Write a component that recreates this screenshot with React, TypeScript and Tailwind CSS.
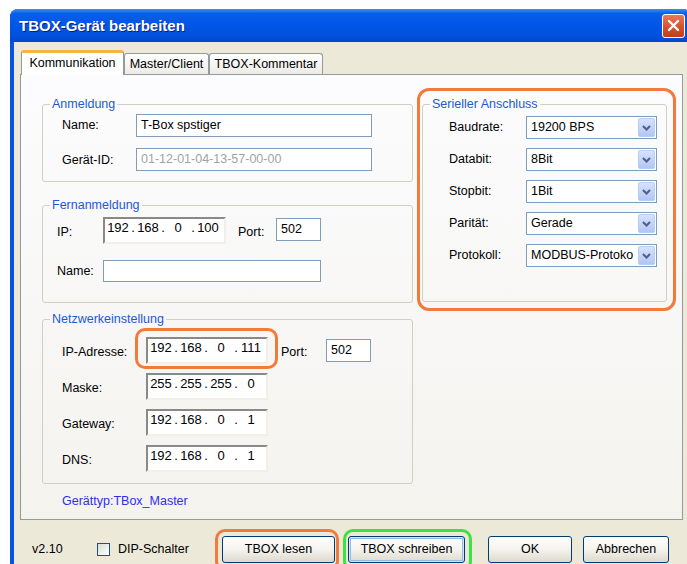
import { Fragment, type ReactNode } from 'react';

function TextBox({ value = '', muted = false, className = '' }: { value?: string; muted?: boolean; className?: string }) {
  return (
    <div
      className={`flex items-center whitespace-nowrap border border-[#7F9DB9] bg-white pl-[4px] ${muted ? 'text-[#A3A3A3]' : 'text-black'} ${className}`}
    >
      {value}
    </div>
  );
}

// sunken IP address control, four octets separated by dots
function IpBox({ parts, className = '' }: { parts: string[]; className?: string }) {
  return (
    <div
      className={`flex border-2 border-t-[#8A8985] border-l-[#8A8985] border-b-[#F1EFE6] border-r-[#F1EFE6] bg-white text-[13px] leading-[18px] ${className}`}
    >
      {parts.map((p, i) => (
        <Fragment key={i}>
          {i > 0 && <span className="w-[4px] text-center">.</span>}
          <span className="w-[26px] text-center">{p}</span>
        </Fragment>
      ))}
    </div>
  );
}

function Combo({ value }: { value: string }) {
  return (
    <div className="flex h-[23px] w-[131px] border border-[#7F9DB9] bg-white">
      <div className="flex-1 overflow-hidden whitespace-nowrap pl-[4px] leading-[21px]">{value}</div>
      <div className="m-[1px] flex w-[17px] items-center justify-center rounded-[2px] border border-[#BACCF3] bg-gradient-to-b from-[#D6E3FD] to-[#B1C6F4]">
        <svg width="9" height="6" viewBox="0 0 9 6">
          <path d="M1 1l3.5 3.5L8 1" fill="none" stroke="#4D6185" strokeWidth="2" />
        </svg>
      </div>
    </div>
  );
}

function Group({ title, className = '', children }: { title: string; className?: string; children: ReactNode }) {
  return (
    <fieldset className={`rounded-[3px] border border-[#D0D0BF] ${className}`}>
      <legend className="ml-[7px] px-[2px] text-[12.5px] leading-[14px] text-[#1E58D6]">{title}</legend>
      {children}
    </fieldset>
  );
}

function XpButton({ children, focused = false, className = '' }: { children: ReactNode; focused?: boolean; className?: string }) {
  return (
    <div
      className={`flex h-[27px] items-center justify-center rounded-[3px] border border-[#003C74] bg-gradient-to-b from-white via-[#F4F3EE] to-[#DDD9CD] ${focused ? 'shadow-[inset_0_0_0_1px_#CEE7FF,inset_0_0_0_2px_#98B8EA]' : ''} ${className}`}
    >
      {children}
    </div>
  );
}

export default function App() {
  return (
    <div className="relative h-[564px] w-[687px] overflow-hidden bg-white font-['Liberation_Sans',Arial,sans-serif] text-[12.5px] leading-[15px] text-black">
      <div className="ml-[10px] mt-[9px] flex h-[570px] w-[681px] flex-col rounded-t-[8px] bg-[#0A53E0]">
        {/* title bar */}
        <div className="flex h-[33px] items-center justify-between rounded-t-[8px] bg-[linear-gradient(to_bottom,#3D8DF8_0%,#0A5DE8_14%,#0056E6_50%,#0050DC_85%,#0045CC_100%)] pl-[9px] pr-[6px]">
          <span className="text-[15px] font-bold text-white [text-shadow:1px_1px_0_#0A1F7A]">TBOX-Gerät bearbeiten</span>
          <div className="flex h-[24px] w-[23px] items-center justify-center rounded-[3px] border border-white bg-gradient-to-b from-[#EA7B58] via-[#D9532F] to-[#C23A1A]">
            <svg width="13" height="13" viewBox="0 0 13 13">
              <path d="M2 2l9 9M11 2l-9 9" stroke="white" strokeWidth="2.4" strokeLinecap="round" />
            </svg>
          </div>
        </div>

        {/* dialog body */}
        <div className="mx-[4px] flex flex-1 flex-col bg-[#ECE9D8] pl-[6px] pt-[8px]">
          {/* tabs */}
          <div className="relative z-10 flex h-[25px] items-end pl-[1px]">
            <div className="flex h-[25px] w-[103px] items-center justify-center rounded-t-[3px] border-x border-t-[3px] border-x-[#919B9C] border-t-[#F5B53F] bg-white pb-[1px]">
              Kommunikation
            </div>
            <div className="mb-px flex h-[21px] w-[85px] items-center justify-center rounded-t-[3px] border-x border-t border-[#919B9C] bg-gradient-to-b from-white to-[#ECEBE6]">
              Master/Client
            </div>
            <div className="mb-px flex h-[21px] w-[114px] items-center justify-center rounded-t-[3px] border-x border-t border-[#919B9C] bg-gradient-to-b from-white to-[#ECEBE6]">
              TBOX-Kommentar
            </div>
          </div>

          {/* tab page */}
          <div className="-mt-px flex h-[446px] w-[663px] items-start border border-[#919B9C] bg-gradient-to-b from-[#FCFCFE] to-[#F4F3EE] pl-[21px]">
            <div className="mt-[22px] flex w-[371px] flex-col">
              <Group title="Anmeldung" className="h-[85px]">
                <div className="flex flex-col gap-[11px] pl-[19px] pt-[3px]">
                  <div className="flex items-center">
                    <span className="w-[74px]">Name:</span>
                    <TextBox value="T-Box spstiger" className="h-[23px] w-[236px]" />
                  </div>
                  <div className="flex items-center">
                    <span className="w-[74px] pt-[2px]">Gerät-ID:</span>
                    <TextBox value="01-12-01-04-13-57-00-00" muted className="h-[23px] w-[236px]" />
                  </div>
                </div>
              </Group>

              <Group title="Fernanmeldung" className="mt-[16px] h-[105px]">
                <div className="flex flex-col pl-[14px] pt-[5px]">
                  <div className="flex items-start">
                    <span className="w-[46px] pt-[8px]">IP:</span>
                    <IpBox parts={['192', '168', '0', '100']} className="h-[27px] w-[123px]" />
                    <span className="ml-[12px] w-[38px] pt-[8px]">Port:</span>
                    <TextBox value="502" className="mt-[1px] h-[23px] w-[45px]" />
                  </div>
                  <div className="mt-[16px] flex items-center">
                    <span className="w-[46px]">Name:</span>
                    <TextBox className="h-[22px] w-[218px]" />
                  </div>
                </div>
              </Group>

              <Group title="Netzwerkeinstellung" className="mt-[9px] h-[172px]">
                <div className="flex flex-col gap-[9px] pl-[19px] pt-[11px]">
                  <div className="flex items-start">
                    <span className="w-[84px] pt-[8px]">IP-Adresse:</span>
                    <div className="relative">
                      <IpBox parts={['192', '168', '0', '111']} className="h-[27px] w-[122px]" />
                      <div className="pointer-events-none absolute -bottom-[5px] -left-[11px] -right-[10px] -top-[9px] rounded-[10px] border-[3px] border-[#F47A3C]" />
                    </div>
                    <span className="ml-[13px] w-[45px] pt-[8px]">Port:</span>
                    <TextBox value="502" className="mt-[2px] h-[23px] w-[45px]" />
                  </div>
                  <div className="flex items-start">
                    <span className="w-[84px] pt-[8px]">Maske:</span>
                    <IpBox parts={['255', '255', '255', '0']} className="h-[27px] w-[122px]" />
                  </div>
                  <div className="flex items-start">
                    <span className="w-[84px] pt-[8px]">Gateway:</span>
                    <IpBox parts={['192', '168', '0', '1']} className="h-[27px] w-[122px]" />
                  </div>
                  <div className="flex items-start">
                    <span className="w-[84px] pt-[8px]">DNS:</span>
                    <IpBox parts={['192', '168', '0', '1']} className="h-[27px] w-[122px]" />
                  </div>
                </div>
              </Group>

              <div className="mt-[10px] pl-[20px] text-[#2F2FEB]">Gerättyp:TBox_Master</div>
            </div>

            <div className="ml-[4px] mt-[13px] h-[223px] w-[259px] rounded-[12px] border-[3px] border-[#F47A3C] pl-[2px] pt-[6px]">
              <Group title="Serieller Anschluss" className="h-[205px] w-[245px]">
                <div className="flex flex-col gap-[9px] pl-[26px] pt-[5px]">
                  {[
                    ['Baudrate:', '19200 BPS'],
                    ['Databit:', '8Bit'],
                    ['Stopbit:', '1Bit'],
                    ['Parität:', 'Gerade'],
                    ['Protokoll:', 'MODBUS-Protoko'],
                  ].map(([l, v]) => (
                    <div key={l} className="flex items-center">
                      <span className="w-[77px]">{l}</span>
                      <Combo value={v} />
                    </div>
                  ))}
                </div>
              </Group>
            </div>
          </div>

          {/* footer */}
          <div className="mt-[16px] flex h-[27px] items-center pl-[12px]">
            <span className="w-[65px]">v2.10</span>
            <div className="flex w-[125px] items-center">
              <div className="h-[13px] w-[13px] border border-[#1C5180] bg-gradient-to-br from-[#DCDBD5] to-white" />
              <span className="ml-[8px]">DIP-Schalter</span>
            </div>
            <div className="relative">
              <XpButton className="w-[113px]">TBOX lesen</XpButton>
              <div className="pointer-events-none absolute -bottom-[8px] -left-[7px] -right-[4px] -top-[7px] rounded-[10px] border-[3px] border-[#F47A3C]" />
            </div>
            <div className="relative ml-[13px]">
              <XpButton focused className="w-[117px]">TBOX schreiben</XpButton>
              <div className="pointer-events-none absolute -bottom-[8px] -left-[5px] -right-[7px] -top-[7px] rounded-[10px] border-[3px] border-[#3CE33C]" />
            </div>
            <XpButton className="ml-[23px] w-[84px]">OK</XpButton>
            <XpButton className="ml-[11px] w-[86px]">Abbrechen</XpButton>
          </div>
        </div>
      </div>
    </div>
  );
}
